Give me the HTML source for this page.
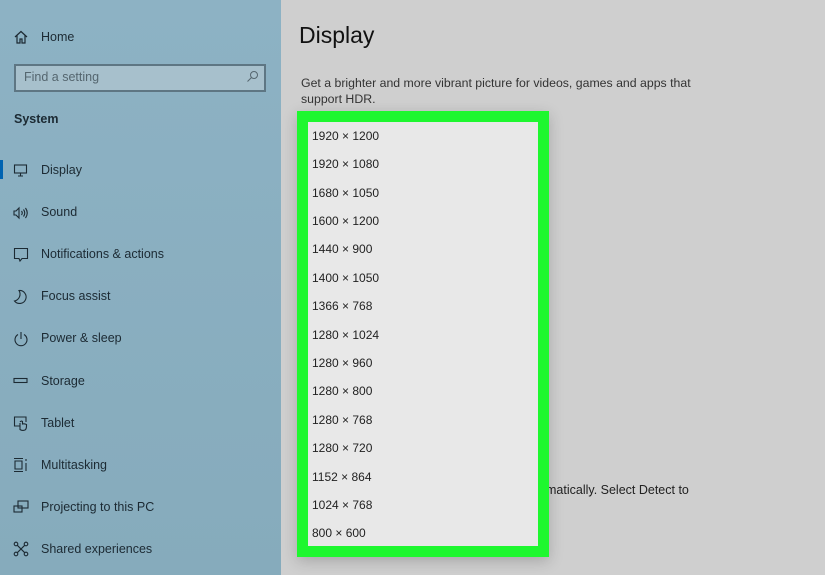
<!DOCTYPE html>
<html><head><meta charset="utf-8"><style>
body{margin:0;width:825px;height:575px;overflow:hidden;font-family:"Liberation Sans",sans-serif;background:#cdcdcd;position:relative}
.side{position:absolute;left:0;top:0;width:281px;height:575px;background:linear-gradient(180deg,#8db2c4,#86abbc);color:#1c2a33}
.it{position:absolute;left:41px;font-size:12.5px}
.ic{position:absolute;left:13px;width:16px;height:16px}
.main{position:absolute;left:281px;top:0;right:0;bottom:0;background:#cfcfcf}
.box{position:absolute;left:297px;top:111px;width:230px;height:424px;border:11px solid #1ef72f;background:#e8e8e8;box-shadow:0 4px 14px rgba(0,0,0,.2)}
.r{position:absolute;left:4px;font-size:12px;color:#222}
</style></head><body>
<div class="side">
<svg class="ic" style="top:29px" viewBox="0 0 16 16" fill="none" stroke="#1c2a33" stroke-width="1.2"><path d="M2 8L8 2.5 14 8M4 6.5V14H7V10H9V14H12V6.5"/></svg>
<div class="it" style="top:30px">Home</div>
<div style="position:absolute;left:14px;top:64px;width:248px;height:24px;border:2px solid #5e7683;background:#a7c0cc"></div>
<div style="position:absolute;left:24px;top:70px;font-size:12.5px;color:#55666f">Find a setting</div>
<svg style="position:absolute;left:246px;top:70px" width="13" height="13" viewBox="0 0 13 13" fill="none" stroke="#55666f"><circle cx="8" cy="5" r="3.5"/><path d="M5.5 7.5L1.5 11.5"/></svg>
<div style="position:absolute;left:14px;top:112px;font-size:12.5px;font-weight:bold">System</div>
<div style="position:absolute;left:0;top:160px;width:3px;height:19px;background:#0063b1"></div>
<svg class="ic" style="top:163px" viewBox="0 0 16 16" fill="none" stroke="#1c2a33" stroke-width="1.1"><rect x="1.5" y="2" width="12" height="8"/><path d="M7.5 10V13M5 13H10"/></svg>
<div class="it" style="top:163px">Display</div>
<svg class="ic" style="top:205px" viewBox="0 0 16 16" fill="none" stroke="#1c2a33" stroke-width="1.1"><path d="M1 6H3L6 3V13L3 10H1Z M8.5 6Q10 8 8.5 10 M10.5 4.5Q13 8 10.5 11.5 M12.5 3Q16 8 12.5 13"/></svg>
<div class="it" style="top:205px">Sound</div>
<svg class="ic" style="top:247px" viewBox="0 0 16 16" fill="none" stroke="#1c2a33" stroke-width="1.1"><path d="M1.5 1.5H14.5V11.5H9L7 14 6 11.5H1.5Z"/></svg>
<div class="it" style="top:247px">Notifications &amp; actions</div>
<svg class="ic" style="top:289px" viewBox="0 0 16 16" fill="none" stroke="#1c2a33" stroke-width="1.1"><path d="M6 1.5A6.5 6.5 0 1 1 1.5 12 7 7 0 0 0 6 1.5Z"/></svg>
<div class="it" style="top:289px">Focus assist</div>
<svg class="ic" style="top:331px" viewBox="0 0 16 16" fill="none" stroke="#1c2a33" stroke-width="1.1"><path d="M5 3.5A6 6 0 1 0 11 3.5M8 1V8"/></svg>
<div class="it" style="top:331px">Power &amp; sleep</div>
<svg class="ic" style="top:373px" viewBox="0 0 16 16" fill="none" stroke="#1c2a33" stroke-width="1.1"><rect x="1" y="5.5" width="13" height="4"/></svg>
<div class="it" style="top:374px">Storage</div>
<svg class="ic" style="top:415px" viewBox="0 0 16 16" fill="none" stroke="#1c2a33" stroke-width="1.1"><path d="M7 11H1.5V2H13V7 M7 8V14.5Q9 16 12 15 13.5 14 13.5 11V9.5Q11 8.5 9.5 9V6.5Q8 5.5 7 7"/></svg>
<div class="it" style="top:416px">Tablet</div>
<svg class="ic" style="top:457px" viewBox="0 0 16 16" fill="none" stroke="#1c2a33" stroke-width="1.1"><path d="M1 1.5H10M1 14.5H10M2 4H9V12H2Z M13 2V4M13 6V14"/></svg>
<div class="it" style="top:458px">Multitasking</div>
<svg class="ic" style="top:499px" viewBox="0 0 16 16" fill="none" stroke="#1c2a33" stroke-width="1.1"><rect x="5" y="2" width="10" height="7"/><rect x="1" y="7" width="8" height="6"/></svg>
<div class="it" style="top:500px">Projecting to this PC</div>
<svg class="ic" style="top:541px" viewBox="0 0 16 16" fill="none" stroke="#1c2a33" stroke-width="1.1"><circle cx="3" cy="3" r="1.8"/><circle cx="13" cy="3" r="1.8"/><circle cx="3" cy="13" r="1.8"/><circle cx="13" cy="13" r="1.8"/><path d="M4.3 4.3L11.7 11.7M11.7 4.3L4.3 11.7"/></svg>
<div class="it" style="top:542px">Shared experiences</div>
</div>
<div class="main">
<div style="position:absolute;left:18px;top:22px;font-size:23px;color:#111">Display</div>
<div style="position:absolute;left:20px;top:75px;font-size:12.3px;color:#333;line-height:16px">Get a brighter and more vibrant picture for videos, games and apps that<br>support HDR.</div>
<div style="position:absolute;left:265px;top:483px;font-size:12.5px;color:#222">matically. Select Detect to</div>
</div>
<div class="box">
<div class="r" style="top:7px">1920 × 1200</div>
<div class="r" style="top:35px">1920 × 1080</div>
<div class="r" style="top:64px">1680 × 1050</div>
<div class="r" style="top:92px">1600 × 1200</div>
<div class="r" style="top:120px">1440 × 900</div>
<div class="r" style="top:149px">1400 × 1050</div>
<div class="r" style="top:177px">1366 × 768</div>
<div class="r" style="top:206px">1280 × 1024</div>
<div class="r" style="top:234px">1280 × 960</div>
<div class="r" style="top:262px">1280 × 800</div>
<div class="r" style="top:291px">1280 × 768</div>
<div class="r" style="top:319px">1280 × 720</div>
<div class="r" style="top:348px">1152 × 864</div>
<div class="r" style="top:376px">1024 × 768</div>
<div class="r" style="top:404px">800 × 600</div>
</div>
</body></html>
